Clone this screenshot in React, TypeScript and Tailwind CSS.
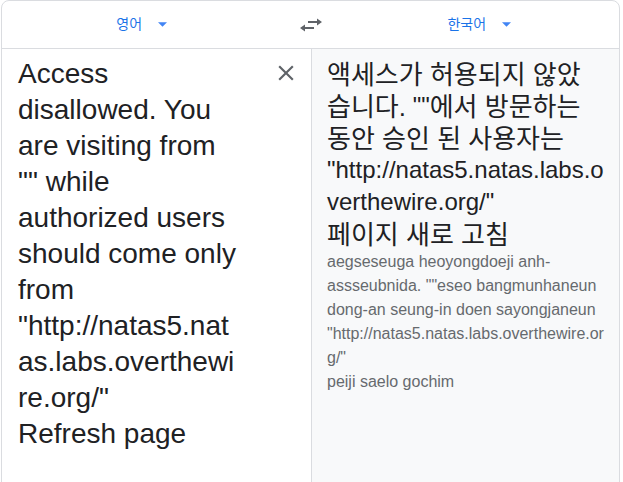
import React from 'react';

const KO = "text-[26px] leading-[25px] align-[-2px]";

const DropArrow = () => (
  <svg width="9" height="5" viewBox="0 0 10 5" className="ml-4">
    <path d="M0 0l5 5 5-5z" fill="#4285f4" />
  </svg>
);

const SwapIcon = () => (
  <svg width="22" height="14" viewBox="0 0 22 14" fill="#5f6368">
    <path d="M8 3h9V0.5L22 4l-5 3.5V5H8z" />
    <path d="M14 9H5V6.5L0 10l5 3.5V11h9z" />
  </svg>
);

const CloseIcon = () => (
  <svg width="26" height="26" viewBox="0 0 24 24" fill="#5f6368" className="ml-[33px] mt-1 shrink-0">
    <path d="M19 6.41L17.59 5 12 10.59 6.41 5 5 6.41 10.59 12 5 17.59 6.41 19 12 13.41 17.59 19 19 17.59 13.41 12z" />
  </svg>
);

export default function App() {
  return (
    <div className="h-[482px] overflow-hidden bg-white font-['Liberation_Sans','Noto_Sans_CJK_KR',sans-serif]">
      <div className="ml-px w-[619px] h-[520px] rounded-t-lg border border-[#dadce0] flex flex-col">
        {/* language bar */}
        <div className="h-[48px] shrink-0 flex items-center border-b border-[#dadce0]">
          <div className="flex-1 flex items-center justify-center">
            <span className="text-[14px] text-[#1a73e8]">영어</span>
            <DropArrow />
          </div>
          <div className="w-[58px] flex justify-center">
            <SwapIcon />
          </div>
          <div className="flex-1 flex items-center justify-center">
            <span className="text-[14px] text-[#1a73e8]">한국어</span>
            <DropArrow />
          </div>
        </div>

        <div className="flex flex-1">
          {/* source */}
          <div className="w-[310px] shrink-0 border-r border-[#dadce0] flex items-start pl-4 pt-[7px]">
            <div className="w-[222px] text-[28px] leading-[36px] text-[#202124] [overflow-wrap:break-word]">
              Access disallowed. You are visiting from "" while authorized users should come only from "http://natas5.natas.labs.overthewire.org/"
              <br />
              Refresh page
            </div>
            <CloseIcon />
          </div>

          {/* translation */}
          <div className="flex-1 bg-[#f8f9fa] pl-[15px] pt-[9px]">
            <div className="w-[280px] text-[24px] leading-[32px] text-[#202124] break-keep [overflow-wrap:break-word]">
              <span className={KO}>액세스가 허용되지 않았 습니다.</span> ""<span className={KO}>에서 방문하는 동안 승인 된 사용자는</span> "http://natas5.natas.labs.overthewire.org/"
              <br />
              <span className={KO}>페이지 새로 고침</span>
            </div>
            <div className="w-[280px] text-[16px] leading-[24px] text-[#666a6e] [overflow-wrap:break-word]">
              aegseseuga heoyongdoeji anh-assseubnida. ""eseo bangmunhaneun dong-an seung-in doen sayongjaneun "http://natas5.natas.labs.overthewire.org/"
              <br />
              peiji saelo gochim
            </div>
          </div>
        </div>
      </div>
    </div>
  );
}
